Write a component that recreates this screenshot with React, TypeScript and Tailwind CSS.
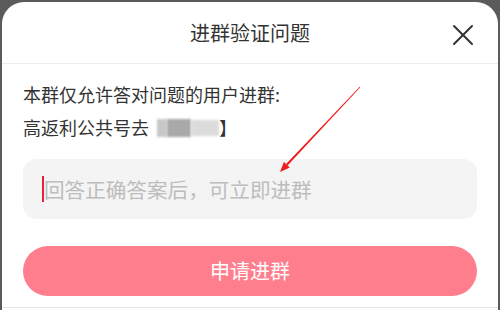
import React from 'react';
import { X } from 'lucide-react';

const font = { fontFamily: '"Noto Sans CJK SC", "Noto Sans", sans-serif' };

const App = () => {
    return (
        <div className="relative w-[500px] h-[310px] bg-[#5b5b5b] pt-[2px] px-[2px] overflow-hidden" style={font}>
            <div className="h-full bg-white rounded-t-[22px] flex flex-col">

                {/* Header */}
                <div className="relative h-[61px] flex items-center justify-center shrink-0">
                    <h2 className="text-[20px] text-[#333] leading-none">进群验证问题</h2>
                    <button className="absolute right-[17px] top-[15px] text-[#333]">
                        <X className="w-[36px] h-[36px]" strokeWidth={1.3} />
                    </button>
                </div>
                <div className="h-px bg-[#ececec] shrink-0"></div>

                {/* Body */}
                <div className="px-[21px] pt-[14px]">
                    <p className="text-[18px] leading-[33px] text-[#333]">本群仅允许答对问题的用户进群:</p>
                    <p className="text-[18px] leading-[33px] text-[#333] flex items-center">
                        高返利公共号去
                        <span className="ml-[8px] inline-flex items-center h-[20px] w-[62px]">
                            <span className="h-[18px] w-[10px] bg-[#c8c8c8] blur-[1px]"></span>
                            <span className="h-[18px] w-[24px] bg-[#a9a9a9] blur-[1px]"></span>
                            <span className="h-[16px] w-[28px] bg-[#dcdcdc] blur-[1px]"></span>
                        </span>
                        <span>】</span>
                    </p>

                    <div className="mt-[15px] h-[60px] rounded-[14px] bg-[#f4f4f4] flex items-center pl-[19px]">
                        <span className="w-[2px] h-[26px] bg-[#e8203c]"></span>
                        <span className="text-[20.6px] text-[#bdbdbd] leading-none">回答正确答案后，可立即进群</span>
                    </div>

                    <button className="mt-[27px] w-full h-[50px] rounded-full bg-[#ff7e8e] text-white text-[20px] leading-none">
                        申请进群
                    </button>
                </div>

                <div className="mt-[11px] h-px bg-[#e4e4e4]"></div>
            </div>

            {/* Annotation arrow */}
            <svg className="absolute left-0 top-0 pointer-events-none" width="500" height="310" viewBox="0 0 500 310">
                <polygon points="360.3,87.3 359.7,86.7 286.1,164.0 287.6,165.4" fill="#ee1c1c" />
                <polygon points="280,172 289.8,167.5 283.9,162" fill="#ee1c1c" />
            </svg>
        </div>
    );
};

export default App;
